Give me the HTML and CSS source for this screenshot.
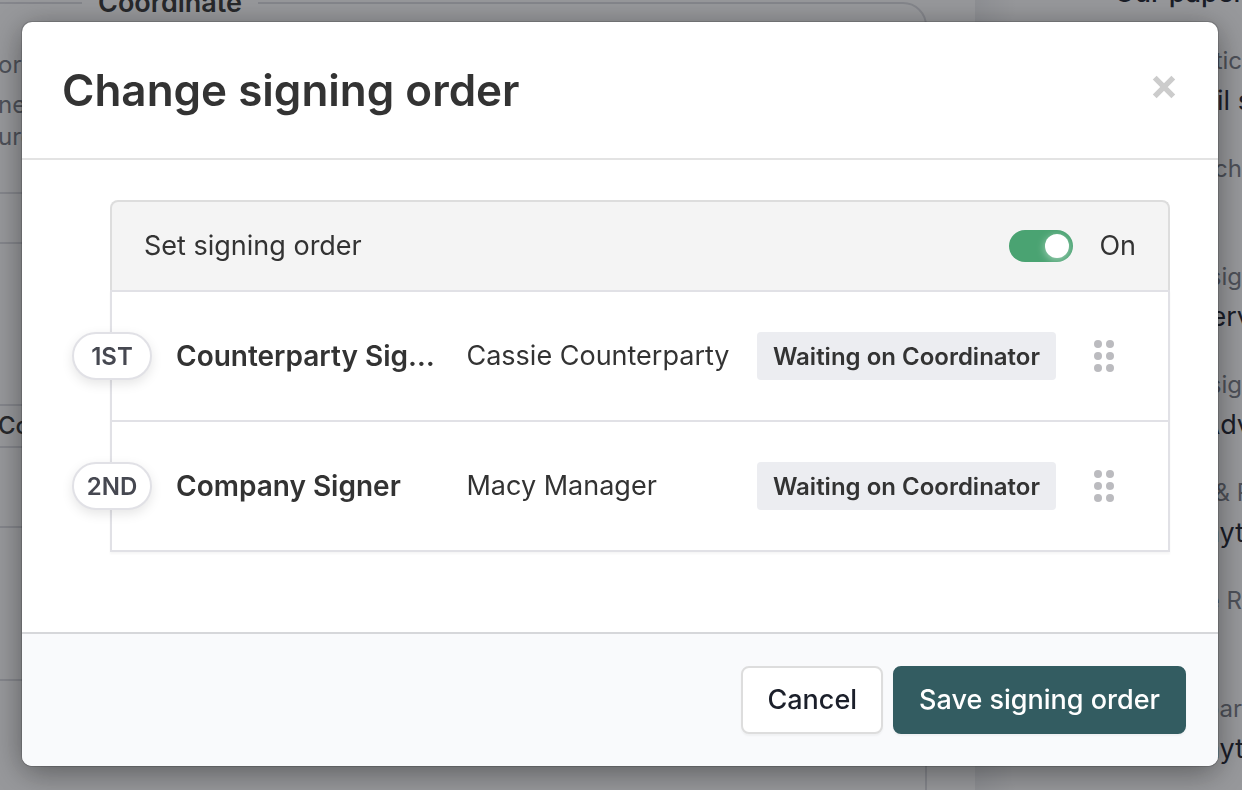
FILE: index.html
```html
<!DOCTYPE html>
<html lang="en">
<head>
<meta charset="utf-8">
<meta name="viewport" content="width=device-width, initial-scale=1">
<title>Change signing order</title>
<link rel="stylesheet" href="styles.css">
</head>
<body>
<div class="page" aria-hidden="true">
  <div class="workflow">
    <fieldset class="stage">
      <legend class="stage-name">Coordinate</legend>
      <p class="note note-lead">or</p>
      <p class="note">ne</p>
      <p class="note">ure</p>
      <div class="band band-first"></div>
      <div class="band band-tall"></div>
      <div class="band band-title">Co</div>
      <div class="band band-medium"></div>
      <div class="band band-last"></div>
      <div class="band"></div>
    </fieldset>
  </div>
  <dl class="details">
    <dd class="strong">Our paper</dd>
    <dt>tic</dt><dd class="wide">il s</dd>
    <dt>ch</dt><dd></dd>
    <dt>sig</dt><dd class="wide">erv</dd>
    <dt>sig</dt><dd class="wide">Adv</dd>
    <dt class="wide">&amp; P</dt><dd>nyt</dd>
    <dt>e R</dt><dd></dd>
    <dt>par</dt><dd>nyt</dd>
  </dl>
</div>

<div class="overlay">
  <div class="modal" role="dialog" aria-modal="true" aria-labelledby="modal-title">
    <header class="modal-header">
      <h1 class="modal-title" id="modal-title">Change signing order</h1>
      <button class="close" type="button" aria-label="Close">
        <svg width="24" height="24" viewBox="0 0 24 24" aria-hidden="true"><path d="M2.7 2.7 21.3 21.3M21.3 2.7 2.7 21.3" fill="none" stroke="#cccccc" stroke-width="5.4"/></svg>
      </button>
    </header>
    <div class="modal-body">
      <div class="panel-head">
        <label for="order-switch">Set signing order</label>
        <div class="switch-group">
          <input class="switch" id="order-switch" type="checkbox" role="switch" checked>
          <span>On</span>
        </div>
      </div>
      <ol class="signers">
        <li class="signer">
          <span class="position">1ST</span>
          <strong class="role">Counterparty Signer</strong>
          <span class="person">Cassie Counterparty</span>
          <span class="status">Waiting on Coordinator</span>
          <button class="handle" type="button" aria-label="Reorder Counterparty Signer">
            <svg width="20" height="32" viewBox="0 0 20 32" fill="#bbbbbf" aria-hidden="true"><circle cx="4" cy="4" r="4"/><circle cx="16" cy="4" r="4"/><circle cx="4" cy="16" r="4"/><circle cx="16" cy="16" r="4"/><circle cx="4" cy="28" r="4"/><circle cx="16" cy="28" r="4"/></svg>
          </button>
        </li>
        <li class="signer">
          <span class="position">2ND</span>
          <strong class="role">Company Signer</strong>
          <span class="person">Macy Manager</span>
          <span class="status">Waiting on Coordinator</span>
          <button class="handle" type="button" aria-label="Reorder Company Signer">
            <svg width="20" height="32" viewBox="0 0 20 32" fill="#bbbbbf" aria-hidden="true"><circle cx="4" cy="4" r="4"/><circle cx="16" cy="4" r="4"/><circle cx="4" cy="16" r="4"/><circle cx="16" cy="16" r="4"/><circle cx="4" cy="28" r="4"/><circle cx="16" cy="28" r="4"/></svg>
          </button>
        </li>
      </ol>
    </div>
    <footer class="modal-footer">
      <button class="button" type="button">Cancel</button>
      <button class="button button-primary" type="button">Save signing order</button>
    </footer>
  </div>
</div>
</body>
</html>
```
FILE: styles.css
```css
*, *::before, *::after {
  box-sizing: border-box;
}

body {
  margin: 0;
  height: 100vh;
  overflow: hidden;
  font-family: Inter, "Liberation Sans", sans-serif;
  font-size: 27px;
  line-height: 40px;
  color: #333333;
}

button {
  font: inherit;
  cursor: pointer;
}

/* Page behind the dialog */
.page {
  display: flex;
  height: 100vh;
  overflow: hidden;
  background: #ffffff;
}

.workflow {
  flex: 1;
}

.stage {
  margin: -17px 48px 0 -27px;
  padding: 0 0 0 23px;
  min-height: 900px;
  border: 2px solid #dcdde2;
  border-radius: 24px;
}

.stage-name {
  margin-left: 84px;
  padding: 0 16px;
  font-weight: 600;
}

.note {
  margin: 0;
  font-size: 24px;
  line-height: 32px;
  color: #787c85;
}

.note-lead {
  margin: 26px 0 8px;
}

.band {
  height: 50px;
  border-top: 2px solid #dcdde2;
}

.band-first {
  margin-top: 39px;
}

.band-tall {
  height: 162px;
}

.band-medium {
  height: 80px;
}

.band-last {
  height: 153px;
}

.band-title {
  height: 42px;
  font-size: 24px;
  font-weight: 500;
}

.details {
  flex: none;
  width: 267px;
  margin: -27px 0 0;
  background: linear-gradient(to right, #eeeff1, #ffffff 40px);
  text-align: right;
  white-space: nowrap;
}

.details dt {
  height: 40px;
  font-size: 24px;
  color: #787c85;
}

.details dd {
  height: 40px;
  margin: 0 -2px 28px 0;
  color: #1b202c;
}

.details .wide {
  margin-right: -10px;
}

.details .strong {
  font-weight: 500;
}

/* Dialog */
.overlay {
  position: fixed;
  inset: 0;
  padding: 22px 24px 24px 22px;
  background: rgba(27, 28, 36, 0.45);
}

.modal {
  overflow: hidden;
  background: #ffffff;
  border-radius: 10px;
  box-shadow: 0 0 0 1px rgba(0, 0, 0, 0.15), 0 6px 32px rgba(0, 0, 0, 0.42);
}

.modal-header {
  display: flex;
  align-items: flex-start;
  justify-content: space-between;
  padding: 38px 42px 38px 40px;
  border-bottom: 2px solid #e3e3e3;
}

.modal-title {
  margin: 0;
  font-size: 44px;
  font-weight: 600;
  line-height: 60px;
}

.close {
  display: flex;
  margin-top: 15px;
  padding: 0;
  border: 0;
  background: none;
}

.modal-body {
  padding: 40px 48px 80px 88px;
}

.panel-head {
  display: flex;
  align-items: center;
  justify-content: space-between;
  padding: 24px 32px;
  background: #f4f4f4;
  border: 2px solid #dddddd;
  border-bottom: 0;
  border-radius: 8px 8px 0 0;
}

.switch-group {
  display: flex;
  align-items: center;
  gap: 26px;
}

.switch {
  display: flex;
  align-items: center;
  justify-content: flex-end;
  width: 64px;
  height: 32px;
  margin: 0;
  padding: 4px;
  appearance: none;
  background: #4aa372;
  border-radius: 16px;
}

.switch::before {
  content: "";
  width: 24px;
  height: 24px;
  background: #ffffff;
  border-radius: 50%;
  box-shadow: 0 2px 8px rgba(255, 255, 255, 0.5);
}

.switch:not(:checked) {
  justify-content: flex-start;
  background: #bbbbbf;
}

.signers {
  margin: 0;
  padding: 0;
  list-style: none;
  border: solid #e1e1e6;
  border-width: 0 2px 2px;
  box-shadow: 0 2px 2px rgba(0, 0, 0, 0.04);
}

.signer {
  position: relative;
  display: grid;
  grid-template-columns: minmax(0, 1fr) minmax(0, 1fr) auto auto;
  align-items: center;
  column-gap: 26px;
  padding: 40px 54px 40px 64px;
  border-top: 2px solid #e1e1e6;
  white-space: nowrap;
}

.position {
  position: absolute;
  top: 40px;
  left: -40px;
  width: 80px;
  height: 48px;
  border: 2px solid #e1e1e6;
  border-radius: 24px;
  background: #ffffff;
  box-shadow: 0 4px 12px rgba(0, 0, 0, 0.1);
  font-size: 24px;
  font-weight: 600;
  line-height: 46px;
  text-align: center;
  color: #464851;
}

.role {
  overflow: hidden;
  font-size: 28px;
  font-weight: 600;
  text-overflow: ellipsis;
}

.status {
  padding: 5px 16px 3px;
  background: #ecedf1;
  border-radius: 4px;
  font-size: 24px;
  font-weight: 600;
}

.handle {
  display: flex;
  margin-left: 12px;
  padding: 0;
  border: 0;
  background: none;
  cursor: grab;
}

.modal-footer {
  display: flex;
  justify-content: flex-end;
  gap: 10px;
  padding: 32px;
  background: #f9fafc;
  border-top: 2px solid #d6d7da;
}

.button {
  padding: 12px 24px;
  border: 2px solid #dddddd;
  border-radius: 8px;
  background: #ffffff;
  box-shadow: 0 2px 2px rgba(0, 0, 0, 0.04);
  color: #1b1f2a;
  font-weight: 500;
}

.button-primary {
  border-color: #335c61;
  background: #335c61;
  color: #ffffff;
}
```
